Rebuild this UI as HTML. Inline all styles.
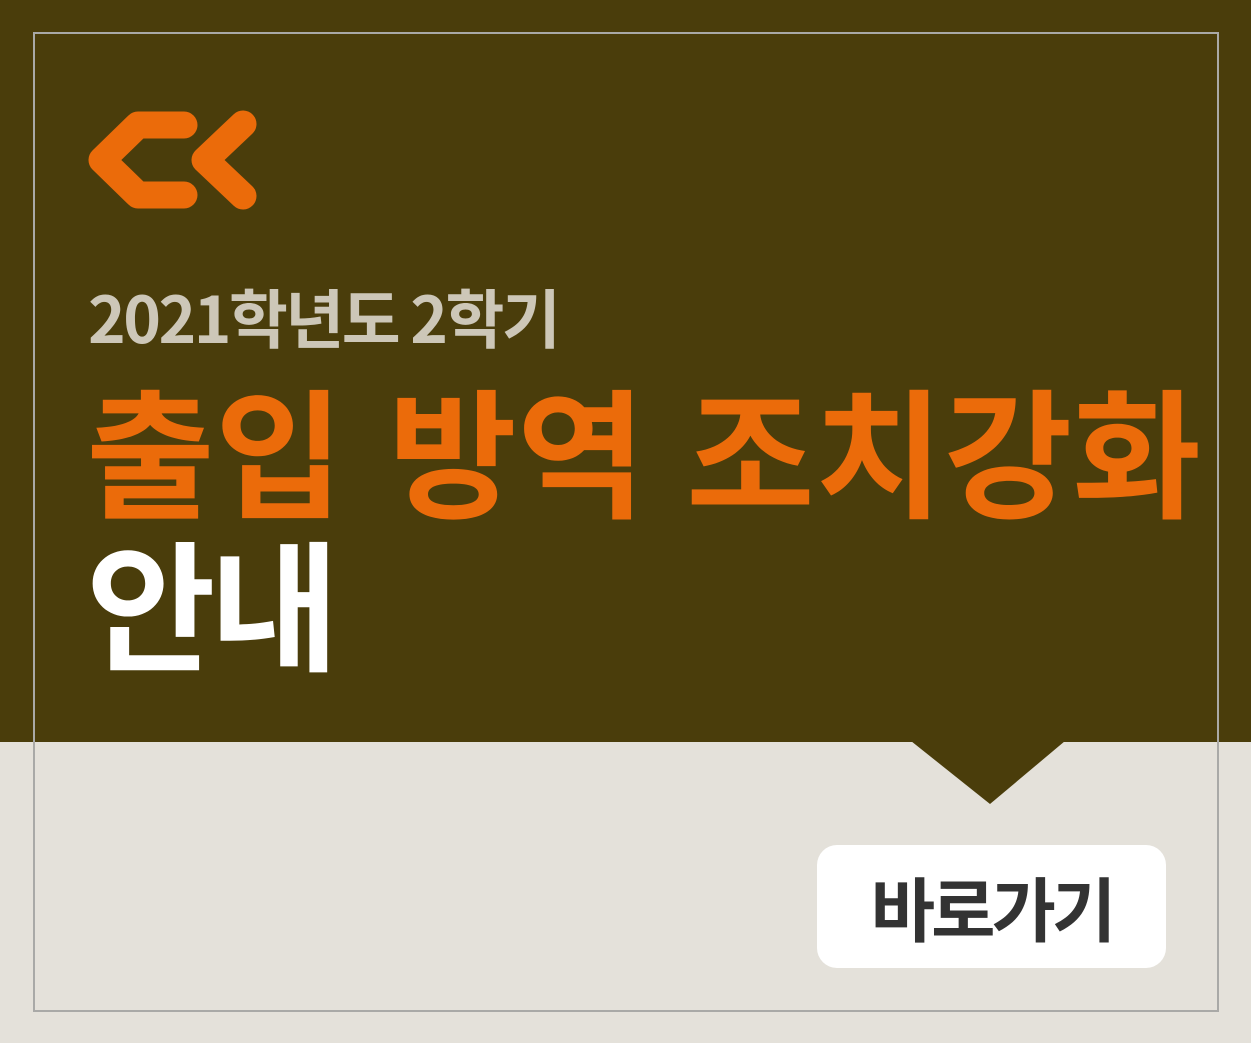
<!DOCTYPE html>
<html><head><meta charset="utf-8"><style>
*{margin:0;padding:0}
body{width:1251px;height:1043px;background:#e4e1da;position:relative;overflow:hidden;font-family:"Noto Sans CJK KR","Liberation Sans",sans-serif;font-weight:700}
.top{position:absolute;left:0;top:0;width:1251px;height:742px;background:#4a3d0b}
.frame{position:absolute;left:33px;top:32px;width:1182px;height:976px;border:2px solid #a9a9a7}
.t{position:absolute;white-space:nowrap;line-height:1}
.o{font-size:140px;color:#eb6b0a;letter-spacing:0px;top:377px}
.btn{position:absolute;left:817px;top:845px;width:349px;height:123px;background:#fff;border-radius:20px;color:#333;font-size:70px;text-align:center;line-height:123px;letter-spacing:-4px}
</style></head><body>
<div class="top"></div>
<svg style="position:absolute;left:0;top:0" width="1251" height="1043">
<polygon points="911,741 1065,741 990,804" fill="#4a3d0b"/>
<g fill="none" stroke="#eb6b0a" stroke-width="27" stroke-linecap="round" stroke-linejoin="round">
<path d="M184,125 L138,125 L102,160 L138,195 L184,195"/>
<path d="M243,124 L205,160 L243,196"/>
</g>
</svg>
<div class="frame"></div>
<div class="t" style="left:88px;top:284px;font-size:64px;color:#cdc7b8;letter-spacing:-2.5px">2021학년도 2학기</div>
<div class="t o" style="left:86px">출입</div>
<div class="t o" style="left:388px">방역</div>
<div class="t o" style="left:686px">조치강화</div>
<div class="t" style="left:86px;top:528px;font-size:141px;color:#fff;letter-spacing:-6px">안내</div>
<div class="btn">바로가기</div>
</body></html>
